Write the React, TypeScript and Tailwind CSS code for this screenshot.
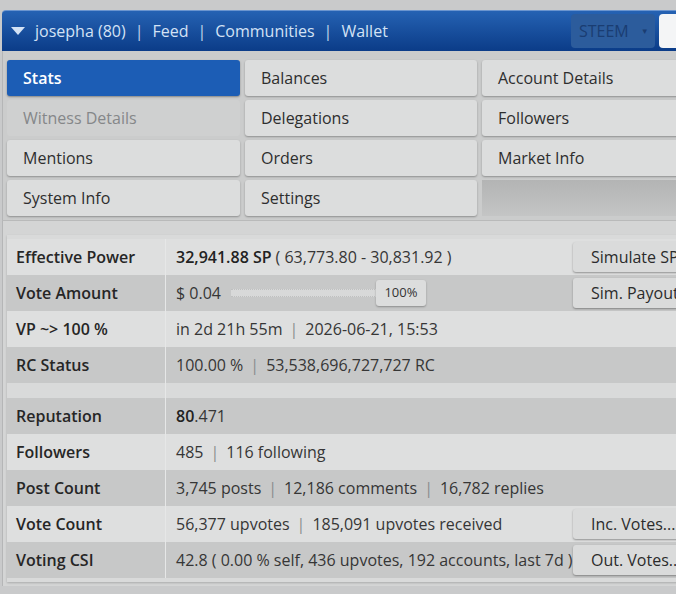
import React from "react";

const tabs: { label: string; active?: boolean; disabled?: boolean; empty?: boolean }[] = [
  { label: "Stats", active: true },
  { label: "Balances" },
  { label: "Account Details" },
  { label: "Witness Details", disabled: true },
  { label: "Delegations" },
  { label: "Followers" },
  { label: "Mentions" },
  { label: "Orders" },
  { label: "Market Info" },
  { label: "System Info" },
  { label: "Settings" },
  { label: "", empty: true },
];

const Sep = () => <span className="mx-[7px] text-[#8a8c8e]">|</span>;
const HSep = () => <span className="mx-[9px] text-[#c3d4ec]">|</span>;

function Btn({ children }: { children: React.ReactNode }) {
  return (
    <div className="absolute left-[566px] top-[3px] h-[30px] w-[130px] rounded-[3px] bg-[#dadbdb] shadow-[0_1px_2px_rgba(0,0,0,0.35)] flex items-center pl-[18px] text-[#2b2b2b]">
      {children}
    </div>
  );
}

function Row({
  label,
  dark,
  children,
  btn,
}: {
  label: string;
  dark?: boolean;
  children?: React.ReactNode;
  btn?: string;
}) {
  return (
    <div className={`relative flex h-[36px] items-center ${dark ? "bg-[#c7c8c8]" : "bg-[#dedfdf]"}`}>
      <div className="w-[159px] shrink-0 pl-[9px] font-semibold text-[#262626] h-full flex items-center border-r border-[#e6e7e7]">
        {label}
      </div>
      <div className="pl-[10px] text-[#363636] flex items-center h-full whitespace-nowrap">{children}</div>
      {btn && <Btn>{btn}</Btn>}
    </div>
  );
}

export default function App() {
  return (
    <div className="w-[676px] h-[594px] overflow-hidden bg-[#c9cacb] font-['Open_Sans',sans-serif] text-[16px]">
      <div className="w-[760px] pt-[10px] pl-[2px]">
        {/* header */}
        <div className="h-[41px] rounded-tl-[4px] bg-gradient-to-b from-[#2562b3] to-[#0b3c88] flex items-center text-[#d3e2f5] border-t border-[#6b95cf]">
          <svg width="14" height="9" viewBox="0 0 14 9" className="ml-[9px] mr-[10px]">
            <polygon points="0,0 14,0 7,8" fill="#d3e2f5" />
          </svg>
          <span>josepha (80)</span>
          <HSep />
          <span>Feed</span>
          <HSep />
          <span>Communities</span>
          <HSep />
          <span>Wallet</span>
          <div className="ml-auto mr-[4px] flex items-center gap-[4px]">
            <div className="h-[34px] w-[84px] rounded-[4px] bg-[#2c5c9c] flex items-center pl-[8px] text-[#1a3d72]">
              STEEM
              <span className="ml-[12px] text-[8px]">▼</span>
            </div>
            <div className="h-[34px] w-[97px] rounded-[4px] bg-[#f4f5f6]" />
          </div>
        </div>

        {/* tabs */}
        <div className="bg-[#cbcccc] border-l border-[#b5b6b7] pl-[4px] pt-[9px] pb-[4px] border-b border-b-[#b9baba]">
          <div className="grid grid-cols-[233px_232px_232px] gap-x-[5px] gap-y-[4px]">
            {tabs.map((t, i) =>
              t.empty ? (
                <div key={i} className="h-[36px] bg-gradient-to-b from-[#b3b4b4] to-[#c4c5c5]" />
              ) : (
                <div
                  key={i}
                  className={`h-[36px] rounded-[3px] flex items-center pl-[16px] ${
                    t.active
                      ? "bg-[#1c5db5] text-white font-semibold shadow-[0_1px_2px_rgba(0,0,0,0.35)]"
                      : t.disabled
                      ? "bg-[#cfd0d0] text-[#858789]"
                      : "bg-[#dcdddd] text-[#2e2e2e] shadow-[0_1px_2px_rgba(0,0,0,0.3)]"
                  }`}
                >
                  {t.label}
                </div>
              )
            )}
          </div>
        </div>

        {/* stats panel */}
        <div className="bg-[#d4d5d5] border-l border-[#b5b6b7] pl-[4px] pt-[14px] pb-[4px]">
          <div className="bg-[#d9dada] pt-[4px] pb-[4px] shadow-[0_1px_2px_rgba(0,0,0,0.2)]">
            <Row label="Effective Power" btn="Simulate SP">
              <span className="font-semibold text-[#222]">32,941.88 SP</span>
              <span className="ml-[4px]">( 63,773.80 - 30,831.92 )</span>
            </Row>
            <Row label="Vote Amount" dark btn="Sim. Payout">
              <span>$ 0.04</span>
              <div className="relative ml-[10px] w-[196px] h-[26px] flex items-center">
                <div className="w-[150px] h-[8px] bg-[#d8d9d9] border-y border-dotted border-[#bfc0c0]" />
                <div className="absolute left-[145px] top-0 h-[26px] w-[50px] rounded-[3px] bg-[#dcdddd] shadow-[0_1px_2px_rgba(0,0,0,0.3)] flex items-center justify-center text-[13px] text-[#333]">
                  100%
                </div>
              </div>
            </Row>
            <Row label="VP ~> 100 %">
              <span>in 2d 21h 55m</span>
              <Sep />
              <span>2026-06-21, 15:53</span>
            </Row>
            <Row label="RC Status" dark>
              <span>100.00 %</span>
              <Sep />
              <span>53,538,696,727,727 RC</span>
            </Row>
            <div className="h-[15px] flex">
              <div className="w-[159px] border-r border-[#e6e7e7]" />
            </div>
            <Row label="Reputation" dark>
              <span className="font-semibold text-[#222]">80</span>
              <span>.471</span>
            </Row>
            <Row label="Followers">
              <span>485</span>
              <Sep />
              <span>116 following</span>
            </Row>
            <Row label="Post Count" dark>
              <span>3,745 posts</span>
              <Sep />
              <span>12,186 comments</span>
              <Sep />
              <span>16,782 replies</span>
            </Row>
            <Row label="Vote Count" btn="Inc. Votes...">
              <span>56,377 upvotes</span>
              <Sep />
              <span>185,091 upvotes received</span>
            </Row>
            <Row label="Voting CSI" dark btn="Out. Votes...">
              <span>42.8 ( 0.00 % self, 436 upvotes, 192 accounts, last 7d )</span>
            </Row>
          </div>
        </div>
      </div>
    </div>
  );
}
